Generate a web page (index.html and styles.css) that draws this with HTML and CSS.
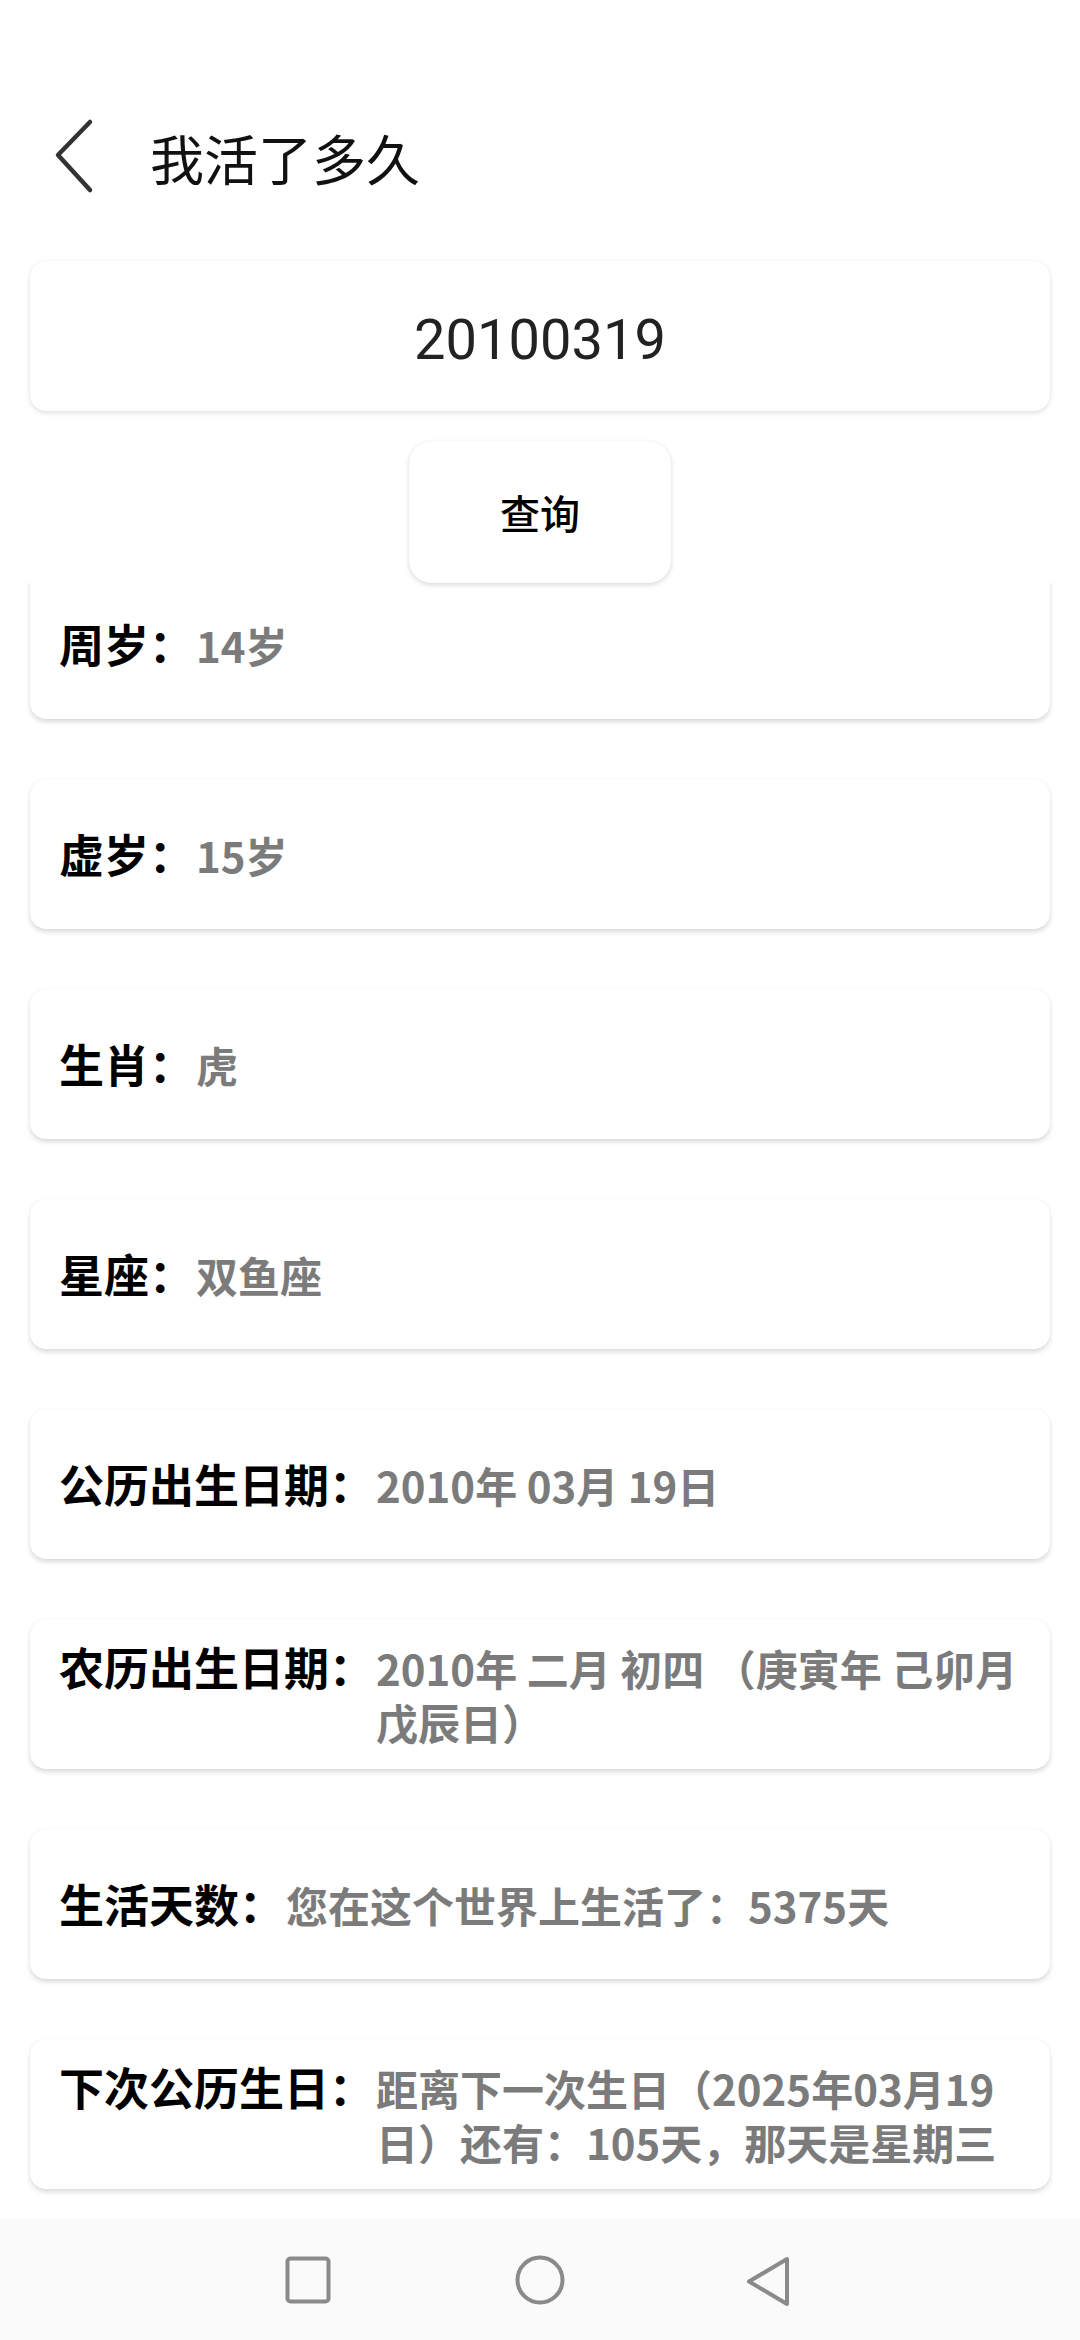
FILE: index.html
```html
<!DOCTYPE html>
<html lang="zh-CN">
<head>
<meta charset="UTF-8">
<title>我活了多久</title>
<link rel="stylesheet" href="styles.css">
</head>
<body>

<div class="topbar">
  <svg class="back-icon" width="44" height="80" viewBox="0 0 44 80">
    <polyline points="38,4 6,37 38,72" fill="none" stroke="#333" stroke-width="4.5" stroke-linecap="round" stroke-linejoin="round"/>
  </svg>
  <div class="page-title">我活了多久</div>
</div>

<div class="date-box">
  <input class="date-input" type="text" value="20100319">
</div>

<div class="btn-row">
  <button class="query-btn">查询</button>
</div>

<div class="result-list">
  <div class="result-card first">
    <div class="result-row"><span class="label">周岁：</span><span class="value">14岁</span></div>
  </div>
  <div class="result-card">
    <div class="result-row"><span class="label">虚岁：</span><span class="value">15岁</span></div>
  </div>
  <div class="result-card">
    <div class="result-row"><span class="label">生肖：</span><span class="value">虎</span></div>
  </div>
  <div class="result-card">
    <div class="result-row"><span class="label">星座：</span><span class="value">双鱼座</span></div>
  </div>
  <div class="result-card">
    <div class="result-row"><span class="label">公历出生日期：</span><span class="value">2010年 03月 19日</span></div>
  </div>
  <div class="result-card">
    <div class="result-row"><span class="label">农历出生日期：</span><span class="value">2010年 二月 初四 （庚寅年 己卯月 戊辰日）</span></div>
  </div>
  <div class="result-card">
    <div class="result-row"><span class="label">生活天数：</span><span class="value">您在这个世界上生活了：5375天</span></div>
  </div>
  <div class="result-card">
    <div class="result-row"><span class="label">下次公历生日：</span><span class="value">距离下一次生日（2025年03月19日）还有：105天，那天是星期三</span></div>
  </div>
</div>

<div class="navbar">
  <svg class="nav-icon" width="60" height="60" viewBox="0 0 60 60">
    <rect x="9.5" y="8.5" width="41" height="43" rx="3" fill="none" stroke="#8a8a8a" stroke-width="4"/>
  </svg>
  <svg class="nav-icon" width="60" height="60" viewBox="0 0 60 60">
    <circle cx="30" cy="30" r="22.5" fill="none" stroke="#8a8a8a" stroke-width="4"/>
  </svg>
  <svg class="nav-icon" width="60" height="60" viewBox="0 0 60 60">
    <polygon points="7,31.5 45,9 45,54" fill="none" stroke="#8a8a8a" stroke-width="4" stroke-linejoin="round"/>
  </svg>
</div>

</body>
</html>
```

FILE: styles.css
```css
html, body
{
margin: 0;
padding: 0;
}

body
{
width: 1080px;
height: 2340px;
background-color: #fff;
font-family: "Noto Sans CJK SC", "Noto Sans", sans-serif;
display: flex;
flex-direction: column;
overflow: hidden;
}

/* header */
.topbar
{
display: flex;
align-items: center;
height: 100px;
padding: 108px 0 0 52px;
gap: 54px;
flex: none;
}

.back-icon
{
display: block;
}

.page-title
{
font-size: 54px;
color: #111;
line-height: 100px;
}

/* date input */
.date-box
{
flex: none;
margin: 53px 30px 0 30px;
height: 150px;
box-sizing: border-box;
padding-top: 8px;
background-color: #fff;
border-radius: 16px;
box-shadow: 0 2px 5px rgba(0, 0, 0, 0.12), 0 0 1px rgba(0, 0, 0, 0.08);
display: flex;
align-items: center;
}

.date-input
{
width: 100%;
border: none;
outline: none;
background: transparent;
text-align: center;
font-family: Roboto, "Noto Sans", sans-serif;
font-size: 56px;
color: #222;
padding: 0;
}

.btn-row
{
flex: none;
display: flex;
justify-content: center;
margin-top: 30px;
position: relative;
z-index: 2;
}

.query-btn
{
width: 262px;
height: 142px;
border: none;
border-radius: 22px;
background-color: #fff;
box-shadow: 0 2px 5px rgba(0, 0, 0, 0.14), 0 0 1px rgba(0, 0, 0, 0.1);
font-family: "Noto Sans CJK SC", sans-serif;
font-size: 40px;
font-weight: 500;
color: #000;
}

/* result list */
.result-list
{
flex: 1;
overflow: hidden;
display: flex;
flex-direction: column;
gap: 60px;
padding: 0 30px;
}

.result-card
{
flex: none;
min-height: 150px;
box-sizing: border-box;
background-color: #fff;
border-radius: 16px;
box-shadow: 0 3px 5px rgba(0, 0, 0, 0.14), 0 0 1px rgba(0, 0, 0, 0.08);
display: flex;
align-items: center;
padding: 0 30px 0 29px;
}

.result-card.first
{
margin-top: -14px;
}

.result-row
{
display: flex;
align-items: baseline;
}

.label
{
flex: none;
font-size: 45px;
font-weight: bold;
color: #000;
line-height: 54px;
white-space: nowrap;
}

.value
{
font-size: 42px;
font-weight: bold;
color: #7b7b7b;
line-height: 54px;
margin-left: 2px;
}

/* system nav */
.navbar
{
flex: none;
height: 122px;
box-sizing: border-box;
padding-top: 2px;
background-color: #fafafa;
display: flex;
justify-content: center;
align-items: center;
gap: 172px;
}

.nav-icon
{
display: block;
}
```
